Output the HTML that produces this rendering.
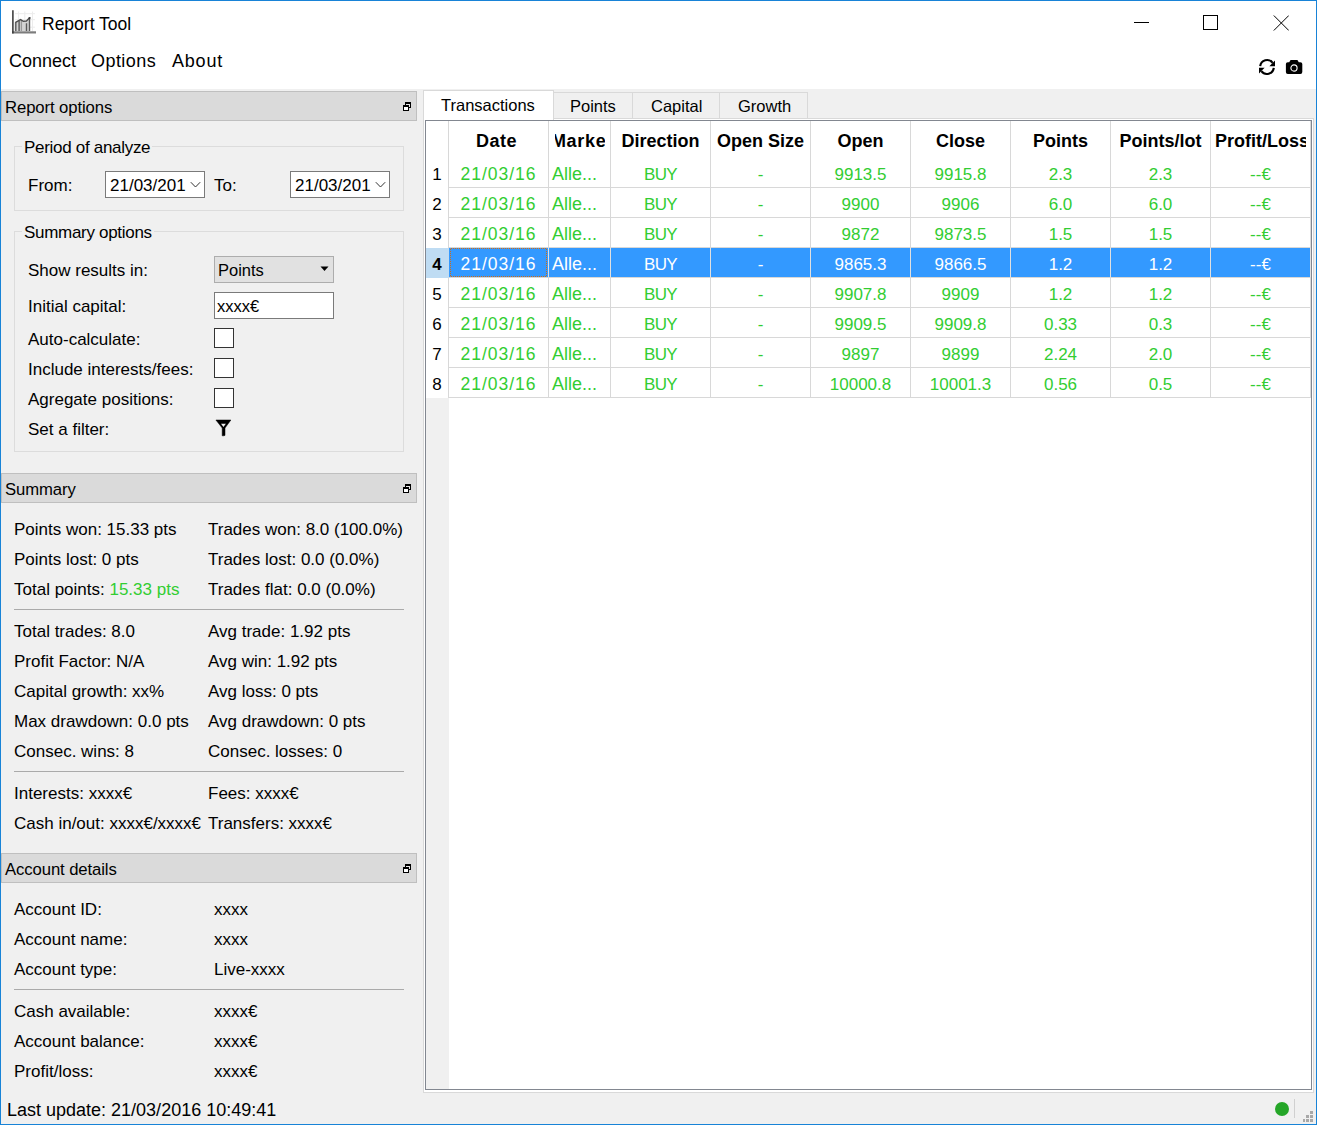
<!DOCTYPE html>
<html><head><meta charset="utf-8"><style>
html,body{margin:0;padding:0}
body{width:1317px;height:1125px;position:relative;overflow:hidden;background:#f0f0f0;font-family:"Liberation Sans",sans-serif;color:#000}
body div, body svg{position:absolute}
.t{white-space:nowrap}
</style></head><body>
<div style="left:1px;top:1px;width:1315px;height:88px;background:#fff"></div>
<svg style="left:0;top:0" width="40" height="40" viewBox="0 0 40 40">
<g stroke="#ececec" stroke-width="1" fill="none"><path d="M18.6 11.5v20M24.8 11.5v20M32.5 11.5v20M15 13.7h20M15 19.7h20M15 27.2h20"/></g>
<path d="M14.5 31V22.6L20.5 19.6L23.4 21.4L26.4 21L29.3 18.3V31z" fill="#d4d4d4"/>
<g stroke="#5a5a5a" stroke-width="1.4" fill="none"><path d="M15.8 31V22.5M19.1 31V21M26.5 31V23.2M29.5 31V19"/></g>
<path d="M21.4 31V19.8" stroke="#9a9a9a" stroke-width="1.3"/>
<path d="M15.2 22.6L20.5 19.6L23.4 21.3L26.4 21L29.4 18" stroke="#505050" stroke-width="1.4" fill="none"/>
<circle cx="29.6" cy="18" r="1.1" fill="#333"/>
<path d="M12.1 32.4H36" stroke="#7c7c7c" stroke-width="2.2"/>
<path d="M12.9 10.2V33.4" stroke="#333" stroke-width="1.5"/>
</svg>
<div class="t" style="left:42px;top:16px;font-size:17.5px;line-height:17.5px;">Report Tool</div>
<div style="left:1134px;top:22px;width:15px;height:1px;background:#000"></div>
<div style="left:1203px;top:15px;width:15px;height:15px;border:1px solid #000;box-sizing:border-box"></div>
<svg style="left:1273px;top:15px" width="16" height="16" viewBox="0 0 16 16"><path d="M0.8 0.5L15.8 15.5M15.8 0.5L0.8 15.5" stroke="#000" stroke-width="1"/></svg>
<div class="t" style="left:9px;top:52px;font-size:18px;line-height:18px;">Connect</div>
<div class="t" style="left:91px;top:52px;font-size:18px;line-height:18px;letter-spacing:0.45px">Options</div>
<div class="t" style="left:172px;top:52px;font-size:18px;line-height:18px;letter-spacing:0.8px">About</div>
<svg style="left:1258px;top:58px" width="18" height="18" viewBox="0 0 18 18">
<path d="M2.2 8.2A6.9 6.9 0 0 1 14.6 4.8" stroke="#000" stroke-width="2.1" fill="none"/>
<path d="M17 2.6V8.2H11.4z" fill="#000"/>
<path d="M15.8 9.8A6.9 6.9 0 0 1 3.4 13.2" stroke="#000" stroke-width="2.1" fill="none"/>
<path d="M1 15.4V9.8H6.6z" fill="#000"/>
</svg>
<svg style="left:1285px;top:59px" width="18" height="16" viewBox="0 0 18 16">
<path d="M5.6 0.9h6.8l1.4 2.3h1.6a1.9 1.9 0 0 1 1.9 1.9v8a1.9 1.9 0 0 1-1.9 1.9H2.8a1.9 1.9 0 0 1-1.9-1.9v-8a1.9 1.9 0 0 1 1.9-1.9h1.4z" fill="#000"/>
<circle cx="9" cy="9" r="3.1" fill="none" stroke="#fff" stroke-width="1.1"/>
</svg>
<div style="left:1px;top:91px;width:416px;height:30px;background:#dadada;border:1px solid #bfbfbf;box-sizing:border-box"></div>
<div class="t" style="left:5px;top:100px;font-size:16.7px;line-height:16.7px;letter-spacing:-0.1px">Report options</div>
<svg style="left:403px;top:102px" width="8" height="9" viewBox="0 0 8 9">
<rect x="2" y="0" width="6" height="6" fill="#000"/><rect x="3" y="2" width="4" height="3" fill="#e8e8e8"/>
<rect x="0" y="3" width="6" height="6" fill="#000"/><rect x="1" y="5" width="4" height="3" fill="#fff"/>
</svg>
<div style="left:14px;top:146px;width:390px;height:65px;border:1px solid #dcdcdc;box-sizing:border-box"></div>
<div class="t" style="left:22px;top:139px;font-size:17px;line-height:17px;padding:0 2px;background:#f0f0f0;letter-spacing:-0.3px">Period of analyze</div>
<div class="t" style="left:28px;top:177px;font-size:17px;line-height:17px;">From:</div>
<div style="left:105px;top:171px;width:100px;height:27px;background:#fff;border:1px solid #7a7a7a;box-sizing:border-box"></div>
<div class="t" style="left:110px;top:177px;font-size:17px;line-height:17px;">21/03/201</div>
<svg style="left:190px;top:181px" width="12" height="8" viewBox="0 0 12 8"><path d="M0.8 1.2L5.5 6l4.7-4.8" stroke="#333" stroke-width="1" fill="none"/></svg>
<div class="t" style="left:214px;top:177px;font-size:17px;line-height:17px;">To:</div>
<div style="left:290px;top:171px;width:100px;height:27px;background:#fff;border:1px solid #7a7a7a;box-sizing:border-box"></div>
<div class="t" style="left:295px;top:177px;font-size:17px;line-height:17px;">21/03/201</div>
<svg style="left:375px;top:181px" width="12" height="8" viewBox="0 0 12 8"><path d="M0.8 1.2L5.5 6l4.7-4.8" stroke="#333" stroke-width="1" fill="none"/></svg>
<div style="left:14px;top:231px;width:390px;height:221px;border:1px solid #dcdcdc;box-sizing:border-box"></div>
<div class="t" style="left:22px;top:224px;font-size:17px;line-height:17px;padding:0 2px;background:#f0f0f0;letter-spacing:-0.3px">Summary options</div>
<div class="t" style="left:28px;top:262px;font-size:17px;line-height:17px;">Show results in:</div>
<div class="t" style="left:28px;top:298px;font-size:17px;line-height:17px;">Initial capital:</div>
<div class="t" style="left:28px;top:331px;font-size:17px;line-height:17px;">Auto-calculate:</div>
<div class="t" style="left:28px;top:361px;font-size:17px;line-height:17px;">Include interests/fees:</div>
<div class="t" style="left:28px;top:391px;font-size:17px;line-height:17px;">Agregate positions:</div>
<div class="t" style="left:28px;top:421px;font-size:17px;line-height:17px;">Set a filter:</div>
<div style="left:214px;top:256px;width:120px;height:27px;background:#e1e1e1;border:1px solid #adadad;box-sizing:border-box"></div>
<div class="t" style="left:218px;top:262px;font-size:16.5px;line-height:16.5px;">Points</div>
<svg style="left:320px;top:266px" width="9" height="6" viewBox="0 0 9 6"><path d="M0.5 0.5h8L4.5 5z" fill="#000"/></svg>
<div style="left:214px;top:292px;width:120px;height:27px;background:#fff;border:1px solid #7a7a7a;box-sizing:border-box"></div>
<div class="t" style="left:217px;top:298px;font-size:16.5px;line-height:16.5px;">xxxx€</div>
<div style="left:214px;top:328px;width:20px;height:20px;background:#fff;border:1px solid #333;box-sizing:border-box"></div>
<div style="left:214px;top:358px;width:20px;height:20px;background:#fff;border:1px solid #333;box-sizing:border-box"></div>
<div style="left:214px;top:388px;width:20px;height:20px;background:#fff;border:1px solid #333;box-sizing:border-box"></div>
<svg style="left:210px;top:414px" width="28" height="26" viewBox="0 0 28 26"><path d="M5.9 6H20.9L15 14V21.4L13.6 21.8H12.2V14z" fill="#000" stroke="#000" stroke-width="0.5" stroke-linejoin="round"/><path d="M11 9.8H15.9L13.45 13z" fill="#f0f0f0"/></svg>
<div style="left:1px;top:473px;width:416px;height:30px;background:#dadada;border:1px solid #bfbfbf;box-sizing:border-box"></div>
<div class="t" style="left:5px;top:482px;font-size:16.7px;line-height:16.7px;letter-spacing:-0.1px">Summary</div>
<svg style="left:403px;top:484px" width="8" height="9" viewBox="0 0 8 9">
<rect x="2" y="0" width="6" height="6" fill="#000"/><rect x="3" y="2" width="4" height="3" fill="#e8e8e8"/>
<rect x="0" y="3" width="6" height="6" fill="#000"/><rect x="1" y="5" width="4" height="3" fill="#fff"/>
</svg>
<div class="t" style="left:14px;top:521px;font-size:17px;line-height:17px;">Points won: 15.33 pts</div>
<div class="t" style="left:208px;top:521px;font-size:17px;line-height:17px;">Trades won: 8.0 (100.0%)</div>
<div class="t" style="left:14px;top:551px;font-size:17px;line-height:17px;">Points lost: 0 pts</div>
<div class="t" style="left:208px;top:551px;font-size:17px;line-height:17px;">Trades lost: 0.0 (0.0%)</div>
<div class="t" style="left:14px;top:581px;font-size:17px;line-height:17px;">Total points: <span style="color:#32cd32">15.33 pts</span></div>
<div class="t" style="left:208px;top:581px;font-size:17px;line-height:17px;">Trades flat: 0.0 (0.0%)</div>
<div class="t" style="left:14px;top:623px;font-size:17px;line-height:17px;">Total trades: 8.0</div>
<div class="t" style="left:208px;top:623px;font-size:17px;line-height:17px;">Avg trade: 1.92 pts</div>
<div class="t" style="left:14px;top:653px;font-size:17px;line-height:17px;">Profit Factor: N/A</div>
<div class="t" style="left:208px;top:653px;font-size:17px;line-height:17px;">Avg win: 1.92 pts</div>
<div class="t" style="left:14px;top:683px;font-size:17px;line-height:17px;">Capital growth: xx%</div>
<div class="t" style="left:208px;top:683px;font-size:17px;line-height:17px;">Avg loss: 0 pts</div>
<div class="t" style="left:14px;top:713px;font-size:17px;line-height:17px;">Max drawdown: 0.0 pts</div>
<div class="t" style="left:208px;top:713px;font-size:17px;line-height:17px;">Avg drawdown: 0 pts</div>
<div class="t" style="left:14px;top:743px;font-size:17px;line-height:17px;">Consec. wins: 8</div>
<div class="t" style="left:208px;top:743px;font-size:17px;line-height:17px;">Consec. losses: 0</div>
<div class="t" style="left:14px;top:785px;font-size:17px;line-height:17px;">Interests: xxxx€</div>
<div class="t" style="left:208px;top:785px;font-size:17px;line-height:17px;">Fees: xxxx€</div>
<div class="t" style="left:14px;top:815px;font-size:17px;line-height:17px;">Cash in/out: xxxx€/xxxx€</div>
<div class="t" style="left:208px;top:815px;font-size:17px;line-height:17px;">Transfers: xxxx€</div>
<div style="left:14px;top:609px;width:390px;height:1px;background:#aaaaaa"></div>
<div style="left:14px;top:771px;width:390px;height:1px;background:#aaaaaa"></div>
<div style="left:1px;top:853px;width:416px;height:30px;background:#dadada;border:1px solid #bfbfbf;box-sizing:border-box"></div>
<div class="t" style="left:5px;top:862px;font-size:16.7px;line-height:16.7px;letter-spacing:-0.1px">Account details</div>
<svg style="left:403px;top:864px" width="8" height="9" viewBox="0 0 8 9">
<rect x="2" y="0" width="6" height="6" fill="#000"/><rect x="3" y="2" width="4" height="3" fill="#e8e8e8"/>
<rect x="0" y="3" width="6" height="6" fill="#000"/><rect x="1" y="5" width="4" height="3" fill="#fff"/>
</svg>
<div class="t" style="left:14px;top:901px;font-size:17px;line-height:17px;">Account ID:</div>
<div class="t" style="left:214px;top:901px;font-size:17px;line-height:17px;">xxxx</div>
<div class="t" style="left:14px;top:931px;font-size:17px;line-height:17px;">Account name:</div>
<div class="t" style="left:214px;top:931px;font-size:17px;line-height:17px;">xxxx</div>
<div class="t" style="left:14px;top:961px;font-size:17px;line-height:17px;">Account type:</div>
<div class="t" style="left:214px;top:961px;font-size:17px;line-height:17px;">Live-xxxx</div>
<div class="t" style="left:14px;top:1003px;font-size:17px;line-height:17px;">Cash available:</div>
<div class="t" style="left:214px;top:1003px;font-size:17px;line-height:17px;">xxxx€</div>
<div class="t" style="left:14px;top:1033px;font-size:17px;line-height:17px;">Account balance:</div>
<div class="t" style="left:214px;top:1033px;font-size:17px;line-height:17px;">xxxx€</div>
<div class="t" style="left:14px;top:1063px;font-size:17px;line-height:17px;">Profit/loss:</div>
<div class="t" style="left:214px;top:1063px;font-size:17px;line-height:17px;">xxxx€</div>
<div style="left:14px;top:989px;width:390px;height:1px;background:#aaaaaa"></div>
<div class="t" style="left:7px;top:1101px;font-size:18px;line-height:18px;">Last update: 21/03/2016 10:49:41</div>
<div style="left:1275px;top:1102px;width:14px;height:14px;border-radius:50%;background:#25a628"></div>
<div style="left:1294px;top:1099px;width:1px;height:19px;background:#d0d0d0"></div>
<div style="left:1310px;top:1111px;width:3px;height:3px;background:#a8a8a8"></div>
<div style="left:1306px;top:1115px;width:3px;height:3px;background:#a8a8a8"></div>
<div style="left:1310px;top:1115px;width:3px;height:3px;background:#a8a8a8"></div>
<div style="left:1303px;top:1119px;width:2px;height:3px;background:#a8a8a8"></div>
<div style="left:1306px;top:1119px;width:3px;height:3px;background:#a8a8a8"></div>
<div style="left:1310px;top:1119px;width:3px;height:3px;background:#a8a8a8"></div>
<div style="left:423px;top:118px;width:891px;height:975px;background:#fff;border:1px solid #d9d9d9;box-sizing:border-box"></div>
<div style="left:553px;top:92px;width:80px;height:27px;background:#f0f0f0;border:1px solid #d9d9d9;box-sizing:border-box"></div>
<div class="t" style="left:570px;top:98px;font-size:16.5px;line-height:16.5px;">Points</div>
<div style="left:632px;top:92px;width:88px;height:27px;background:#f0f0f0;border:1px solid #d9d9d9;box-sizing:border-box"></div>
<div class="t" style="left:651px;top:98px;font-size:16.5px;line-height:16.5px;">Capital</div>
<div style="left:719px;top:92px;width:89px;height:27px;background:#f0f0f0;border:1px solid #d9d9d9;box-sizing:border-box"></div>
<div class="t" style="left:738px;top:98px;font-size:16.5px;line-height:16.5px;">Growth</div>
<div style="left:423px;top:90px;width:131px;height:30px;background:#fff;border:1px solid #d9d9d9;border-bottom:none;box-sizing:border-box"></div>
<div class="t" style="left:441px;top:97px;font-size:16.5px;line-height:16.5px;">Transactions</div>
<div style="left:425px;top:120px;width:887px;height:970px;background:#fff;border:1px solid #828790;box-sizing:border-box"></div>
<div style="left:426px;top:398px;width:23px;height:691px;background:#f0f0f0"></div>
<div style="left:448px;top:121px;width:1px;height:277px;background:#d8d8d8"></div>
<div style="left:548px;top:121px;width:1px;height:277px;background:#d8d8d8"></div>
<div style="left:610px;top:121px;width:1px;height:277px;background:#d8d8d8"></div>
<div style="left:710px;top:121px;width:1px;height:277px;background:#d8d8d8"></div>
<div style="left:810px;top:121px;width:1px;height:277px;background:#d8d8d8"></div>
<div style="left:910px;top:121px;width:1px;height:277px;background:#d8d8d8"></div>
<div style="left:1010px;top:121px;width:1px;height:277px;background:#d8d8d8"></div>
<div style="left:1110px;top:121px;width:1px;height:277px;background:#d8d8d8"></div>
<div style="left:1210px;top:121px;width:1px;height:277px;background:#d8d8d8"></div>
<div style="left:1310px;top:121px;width:1px;height:277px;background:#d8d8d8"></div>
<div style="left:449px;top:187px;width:862px;height:1px;background:#d8d8d8"></div>
<div style="left:449px;top:217px;width:862px;height:1px;background:#d8d8d8"></div>
<div style="left:449px;top:247px;width:862px;height:1px;background:#d8d8d8"></div>
<div style="left:449px;top:277px;width:862px;height:1px;background:#d8d8d8"></div>
<div style="left:449px;top:307px;width:862px;height:1px;background:#d8d8d8"></div>
<div style="left:449px;top:337px;width:862px;height:1px;background:#d8d8d8"></div>
<div style="left:449px;top:367px;width:862px;height:1px;background:#d8d8d8"></div>
<div style="left:449px;top:397px;width:862px;height:1px;background:#d8d8d8"></div>
<div style="left:449px;top:248px;width:862px;height:29px;background:#3399ff"></div>
<div style="left:548px;top:248px;width:1px;height:29px;background:#e0e0e0"></div>
<div style="left:610px;top:248px;width:1px;height:29px;background:#e0e0e0"></div>
<div style="left:710px;top:248px;width:1px;height:29px;background:#e0e0e0"></div>
<div style="left:810px;top:248px;width:1px;height:29px;background:#e0e0e0"></div>
<div style="left:910px;top:248px;width:1px;height:29px;background:#e0e0e0"></div>
<div style="left:1010px;top:248px;width:1px;height:29px;background:#e0e0e0"></div>
<div style="left:1110px;top:248px;width:1px;height:29px;background:#e0e0e0"></div>
<div style="left:1210px;top:248px;width:1px;height:29px;background:#e0e0e0"></div>
<div style="left:1310px;top:248px;width:1px;height:29px;background:#e0e0e0"></div>
<div style="left:426px;top:248px;width:23px;height:30px;background:#bfdcf3"></div>
<svg style="left:450px;top:248px" width="97" height="29" viewBox="0 0 97 29" shape-rendering="crispEdges"><path d="M1 0.5h95M1 28.5h95M0.5 1v27M96.5 1v27" stroke="#d46c12" stroke-width="1" stroke-dasharray="1 1" fill="none"/></svg>
<div class="t" style="left:447px;top:132px;width:99px;text-align:center;font-size:18px;line-height:18px;font-weight:bold;letter-spacing:0.5px">Date</div>
<div style="left:555px;top:121px;width:50px;height:36px;overflow:hidden"><div class="t" style="left:-25px;top:11px;width:104px;text-align:center;font-weight:bold;font-size:18px;line-height:18px;letter-spacing:0.7px">Market</div></div>
<div class="t" style="left:611px;top:132px;width:99px;text-align:center;font-size:18px;line-height:18px;font-weight:bold">Direction</div>
<div class="t" style="left:711px;top:132px;width:99px;text-align:center;font-size:18px;line-height:18px;font-weight:bold">Open Size</div>
<div class="t" style="left:811px;top:132px;width:99px;text-align:center;font-size:18px;line-height:18px;font-weight:bold">Open</div>
<div class="t" style="left:911px;top:132px;width:99px;text-align:center;font-size:18px;line-height:18px;font-weight:bold">Close</div>
<div class="t" style="left:1011px;top:132px;width:99px;text-align:center;font-size:18px;line-height:18px;font-weight:bold">Points</div>
<div class="t" style="left:1111px;top:132px;width:99px;text-align:center;font-size:18px;line-height:18px;font-weight:bold">Points/lot</div>
<div style="left:1211px;top:121px;width:95px;height:36px;overflow:hidden"><div class="t" style="left:4px;top:11px;font-weight:bold;font-size:18px;line-height:18px">Profit/Loss</div></div>
<div class="t" style="left:426px;top:166px;width:22px;text-align:center;font-size:17px;line-height:17px;color:#000">1</div>
<div class="t" style="left:449px;top:166px;width:99px;text-align:center;font-size:17.5px;line-height:17.5px;color:#32cd32;letter-spacing:1px">21/03/16</div>
<div class="t" style="left:552px;top:165px;font-size:18px;line-height:18px;color:#32cd32">Alle...</div>
<div class="t" style="left:611px;top:166px;width:99px;text-align:center;font-size:17px;line-height:17px;color:#32cd32;letter-spacing:-0.6px">BUY</div>
<div class="t" style="left:711px;top:166px;width:99px;text-align:center;font-size:17px;line-height:17px;color:#32cd32;letter-spacing:0px">-</div>
<div class="t" style="left:811px;top:166px;width:99px;text-align:center;font-size:17px;line-height:17px;color:#32cd32;letter-spacing:0px">9913.5</div>
<div class="t" style="left:911px;top:166px;width:99px;text-align:center;font-size:17px;line-height:17px;color:#32cd32;letter-spacing:0px">9915.8</div>
<div class="t" style="left:1011px;top:166px;width:99px;text-align:center;font-size:17px;line-height:17px;color:#32cd32;letter-spacing:0px">2.3</div>
<div class="t" style="left:1111px;top:166px;width:99px;text-align:center;font-size:17px;line-height:17px;color:#32cd32;letter-spacing:0px">2.3</div>
<div class="t" style="left:1211px;top:166px;width:99px;text-align:center;font-size:17px;line-height:17px;color:#32cd32;letter-spacing:0px">--€</div>
<div class="t" style="left:426px;top:196px;width:22px;text-align:center;font-size:17px;line-height:17px;color:#000">2</div>
<div class="t" style="left:449px;top:196px;width:99px;text-align:center;font-size:17.5px;line-height:17.5px;color:#32cd32;letter-spacing:1px">21/03/16</div>
<div class="t" style="left:552px;top:195px;font-size:18px;line-height:18px;color:#32cd32">Alle...</div>
<div class="t" style="left:611px;top:196px;width:99px;text-align:center;font-size:17px;line-height:17px;color:#32cd32;letter-spacing:-0.6px">BUY</div>
<div class="t" style="left:711px;top:196px;width:99px;text-align:center;font-size:17px;line-height:17px;color:#32cd32;letter-spacing:0px">-</div>
<div class="t" style="left:811px;top:196px;width:99px;text-align:center;font-size:17px;line-height:17px;color:#32cd32;letter-spacing:0px">9900</div>
<div class="t" style="left:911px;top:196px;width:99px;text-align:center;font-size:17px;line-height:17px;color:#32cd32;letter-spacing:0px">9906</div>
<div class="t" style="left:1011px;top:196px;width:99px;text-align:center;font-size:17px;line-height:17px;color:#32cd32;letter-spacing:0px">6.0</div>
<div class="t" style="left:1111px;top:196px;width:99px;text-align:center;font-size:17px;line-height:17px;color:#32cd32;letter-spacing:0px">6.0</div>
<div class="t" style="left:1211px;top:196px;width:99px;text-align:center;font-size:17px;line-height:17px;color:#32cd32;letter-spacing:0px">--€</div>
<div class="t" style="left:426px;top:226px;width:22px;text-align:center;font-size:17px;line-height:17px;color:#000">3</div>
<div class="t" style="left:449px;top:226px;width:99px;text-align:center;font-size:17.5px;line-height:17.5px;color:#32cd32;letter-spacing:1px">21/03/16</div>
<div class="t" style="left:552px;top:225px;font-size:18px;line-height:18px;color:#32cd32">Alle...</div>
<div class="t" style="left:611px;top:226px;width:99px;text-align:center;font-size:17px;line-height:17px;color:#32cd32;letter-spacing:-0.6px">BUY</div>
<div class="t" style="left:711px;top:226px;width:99px;text-align:center;font-size:17px;line-height:17px;color:#32cd32;letter-spacing:0px">-</div>
<div class="t" style="left:811px;top:226px;width:99px;text-align:center;font-size:17px;line-height:17px;color:#32cd32;letter-spacing:0px">9872</div>
<div class="t" style="left:911px;top:226px;width:99px;text-align:center;font-size:17px;line-height:17px;color:#32cd32;letter-spacing:0px">9873.5</div>
<div class="t" style="left:1011px;top:226px;width:99px;text-align:center;font-size:17px;line-height:17px;color:#32cd32;letter-spacing:0px">1.5</div>
<div class="t" style="left:1111px;top:226px;width:99px;text-align:center;font-size:17px;line-height:17px;color:#32cd32;letter-spacing:0px">1.5</div>
<div class="t" style="left:1211px;top:226px;width:99px;text-align:center;font-size:17px;line-height:17px;color:#32cd32;letter-spacing:0px">--€</div>
<div class="t" style="left:426px;top:256px;width:22px;text-align:center;font-size:17px;line-height:17px;color:#000;font-weight:bold">4</div>
<div class="t" style="left:449px;top:256px;width:99px;text-align:center;font-size:17.5px;line-height:17.5px;color:#fff;letter-spacing:1px">21/03/16</div>
<div class="t" style="left:552px;top:255px;font-size:18px;line-height:18px;color:#fff">Alle...</div>
<div class="t" style="left:611px;top:256px;width:99px;text-align:center;font-size:17px;line-height:17px;color:#fff;letter-spacing:-0.6px">BUY</div>
<div class="t" style="left:711px;top:256px;width:99px;text-align:center;font-size:17px;line-height:17px;color:#fff;letter-spacing:0px">-</div>
<div class="t" style="left:811px;top:256px;width:99px;text-align:center;font-size:17px;line-height:17px;color:#fff;letter-spacing:0px">9865.3</div>
<div class="t" style="left:911px;top:256px;width:99px;text-align:center;font-size:17px;line-height:17px;color:#fff;letter-spacing:0px">9866.5</div>
<div class="t" style="left:1011px;top:256px;width:99px;text-align:center;font-size:17px;line-height:17px;color:#fff;letter-spacing:0px">1.2</div>
<div class="t" style="left:1111px;top:256px;width:99px;text-align:center;font-size:17px;line-height:17px;color:#fff;letter-spacing:0px">1.2</div>
<div class="t" style="left:1211px;top:256px;width:99px;text-align:center;font-size:17px;line-height:17px;color:#fff;letter-spacing:0px">--€</div>
<div class="t" style="left:426px;top:286px;width:22px;text-align:center;font-size:17px;line-height:17px;color:#000">5</div>
<div class="t" style="left:449px;top:286px;width:99px;text-align:center;font-size:17.5px;line-height:17.5px;color:#32cd32;letter-spacing:1px">21/03/16</div>
<div class="t" style="left:552px;top:285px;font-size:18px;line-height:18px;color:#32cd32">Alle...</div>
<div class="t" style="left:611px;top:286px;width:99px;text-align:center;font-size:17px;line-height:17px;color:#32cd32;letter-spacing:-0.6px">BUY</div>
<div class="t" style="left:711px;top:286px;width:99px;text-align:center;font-size:17px;line-height:17px;color:#32cd32;letter-spacing:0px">-</div>
<div class="t" style="left:811px;top:286px;width:99px;text-align:center;font-size:17px;line-height:17px;color:#32cd32;letter-spacing:0px">9907.8</div>
<div class="t" style="left:911px;top:286px;width:99px;text-align:center;font-size:17px;line-height:17px;color:#32cd32;letter-spacing:0px">9909</div>
<div class="t" style="left:1011px;top:286px;width:99px;text-align:center;font-size:17px;line-height:17px;color:#32cd32;letter-spacing:0px">1.2</div>
<div class="t" style="left:1111px;top:286px;width:99px;text-align:center;font-size:17px;line-height:17px;color:#32cd32;letter-spacing:0px">1.2</div>
<div class="t" style="left:1211px;top:286px;width:99px;text-align:center;font-size:17px;line-height:17px;color:#32cd32;letter-spacing:0px">--€</div>
<div class="t" style="left:426px;top:316px;width:22px;text-align:center;font-size:17px;line-height:17px;color:#000">6</div>
<div class="t" style="left:449px;top:316px;width:99px;text-align:center;font-size:17.5px;line-height:17.5px;color:#32cd32;letter-spacing:1px">21/03/16</div>
<div class="t" style="left:552px;top:315px;font-size:18px;line-height:18px;color:#32cd32">Alle...</div>
<div class="t" style="left:611px;top:316px;width:99px;text-align:center;font-size:17px;line-height:17px;color:#32cd32;letter-spacing:-0.6px">BUY</div>
<div class="t" style="left:711px;top:316px;width:99px;text-align:center;font-size:17px;line-height:17px;color:#32cd32;letter-spacing:0px">-</div>
<div class="t" style="left:811px;top:316px;width:99px;text-align:center;font-size:17px;line-height:17px;color:#32cd32;letter-spacing:0px">9909.5</div>
<div class="t" style="left:911px;top:316px;width:99px;text-align:center;font-size:17px;line-height:17px;color:#32cd32;letter-spacing:0px">9909.8</div>
<div class="t" style="left:1011px;top:316px;width:99px;text-align:center;font-size:17px;line-height:17px;color:#32cd32;letter-spacing:0px">0.33</div>
<div class="t" style="left:1111px;top:316px;width:99px;text-align:center;font-size:17px;line-height:17px;color:#32cd32;letter-spacing:0px">0.3</div>
<div class="t" style="left:1211px;top:316px;width:99px;text-align:center;font-size:17px;line-height:17px;color:#32cd32;letter-spacing:0px">--€</div>
<div class="t" style="left:426px;top:346px;width:22px;text-align:center;font-size:17px;line-height:17px;color:#000">7</div>
<div class="t" style="left:449px;top:346px;width:99px;text-align:center;font-size:17.5px;line-height:17.5px;color:#32cd32;letter-spacing:1px">21/03/16</div>
<div class="t" style="left:552px;top:345px;font-size:18px;line-height:18px;color:#32cd32">Alle...</div>
<div class="t" style="left:611px;top:346px;width:99px;text-align:center;font-size:17px;line-height:17px;color:#32cd32;letter-spacing:-0.6px">BUY</div>
<div class="t" style="left:711px;top:346px;width:99px;text-align:center;font-size:17px;line-height:17px;color:#32cd32;letter-spacing:0px">-</div>
<div class="t" style="left:811px;top:346px;width:99px;text-align:center;font-size:17px;line-height:17px;color:#32cd32;letter-spacing:0px">9897</div>
<div class="t" style="left:911px;top:346px;width:99px;text-align:center;font-size:17px;line-height:17px;color:#32cd32;letter-spacing:0px">9899</div>
<div class="t" style="left:1011px;top:346px;width:99px;text-align:center;font-size:17px;line-height:17px;color:#32cd32;letter-spacing:0px">2.24</div>
<div class="t" style="left:1111px;top:346px;width:99px;text-align:center;font-size:17px;line-height:17px;color:#32cd32;letter-spacing:0px">2.0</div>
<div class="t" style="left:1211px;top:346px;width:99px;text-align:center;font-size:17px;line-height:17px;color:#32cd32;letter-spacing:0px">--€</div>
<div class="t" style="left:426px;top:376px;width:22px;text-align:center;font-size:17px;line-height:17px;color:#000">8</div>
<div class="t" style="left:449px;top:376px;width:99px;text-align:center;font-size:17.5px;line-height:17.5px;color:#32cd32;letter-spacing:1px">21/03/16</div>
<div class="t" style="left:552px;top:375px;font-size:18px;line-height:18px;color:#32cd32">Alle...</div>
<div class="t" style="left:611px;top:376px;width:99px;text-align:center;font-size:17px;line-height:17px;color:#32cd32;letter-spacing:-0.6px">BUY</div>
<div class="t" style="left:711px;top:376px;width:99px;text-align:center;font-size:17px;line-height:17px;color:#32cd32;letter-spacing:0px">-</div>
<div class="t" style="left:811px;top:376px;width:99px;text-align:center;font-size:17px;line-height:17px;color:#32cd32;letter-spacing:0px">10000.8</div>
<div class="t" style="left:911px;top:376px;width:99px;text-align:center;font-size:17px;line-height:17px;color:#32cd32;letter-spacing:0px">10001.3</div>
<div class="t" style="left:1011px;top:376px;width:99px;text-align:center;font-size:17px;line-height:17px;color:#32cd32;letter-spacing:0px">0.56</div>
<div class="t" style="left:1111px;top:376px;width:99px;text-align:center;font-size:17px;line-height:17px;color:#32cd32;letter-spacing:0px">0.5</div>
<div class="t" style="left:1211px;top:376px;width:99px;text-align:center;font-size:17px;line-height:17px;color:#32cd32;letter-spacing:0px">--€</div>
<div style="left:0;top:0;width:1317px;height:1125px;border:1px solid #1883d7;box-sizing:border-box"></div>
</body></html>
